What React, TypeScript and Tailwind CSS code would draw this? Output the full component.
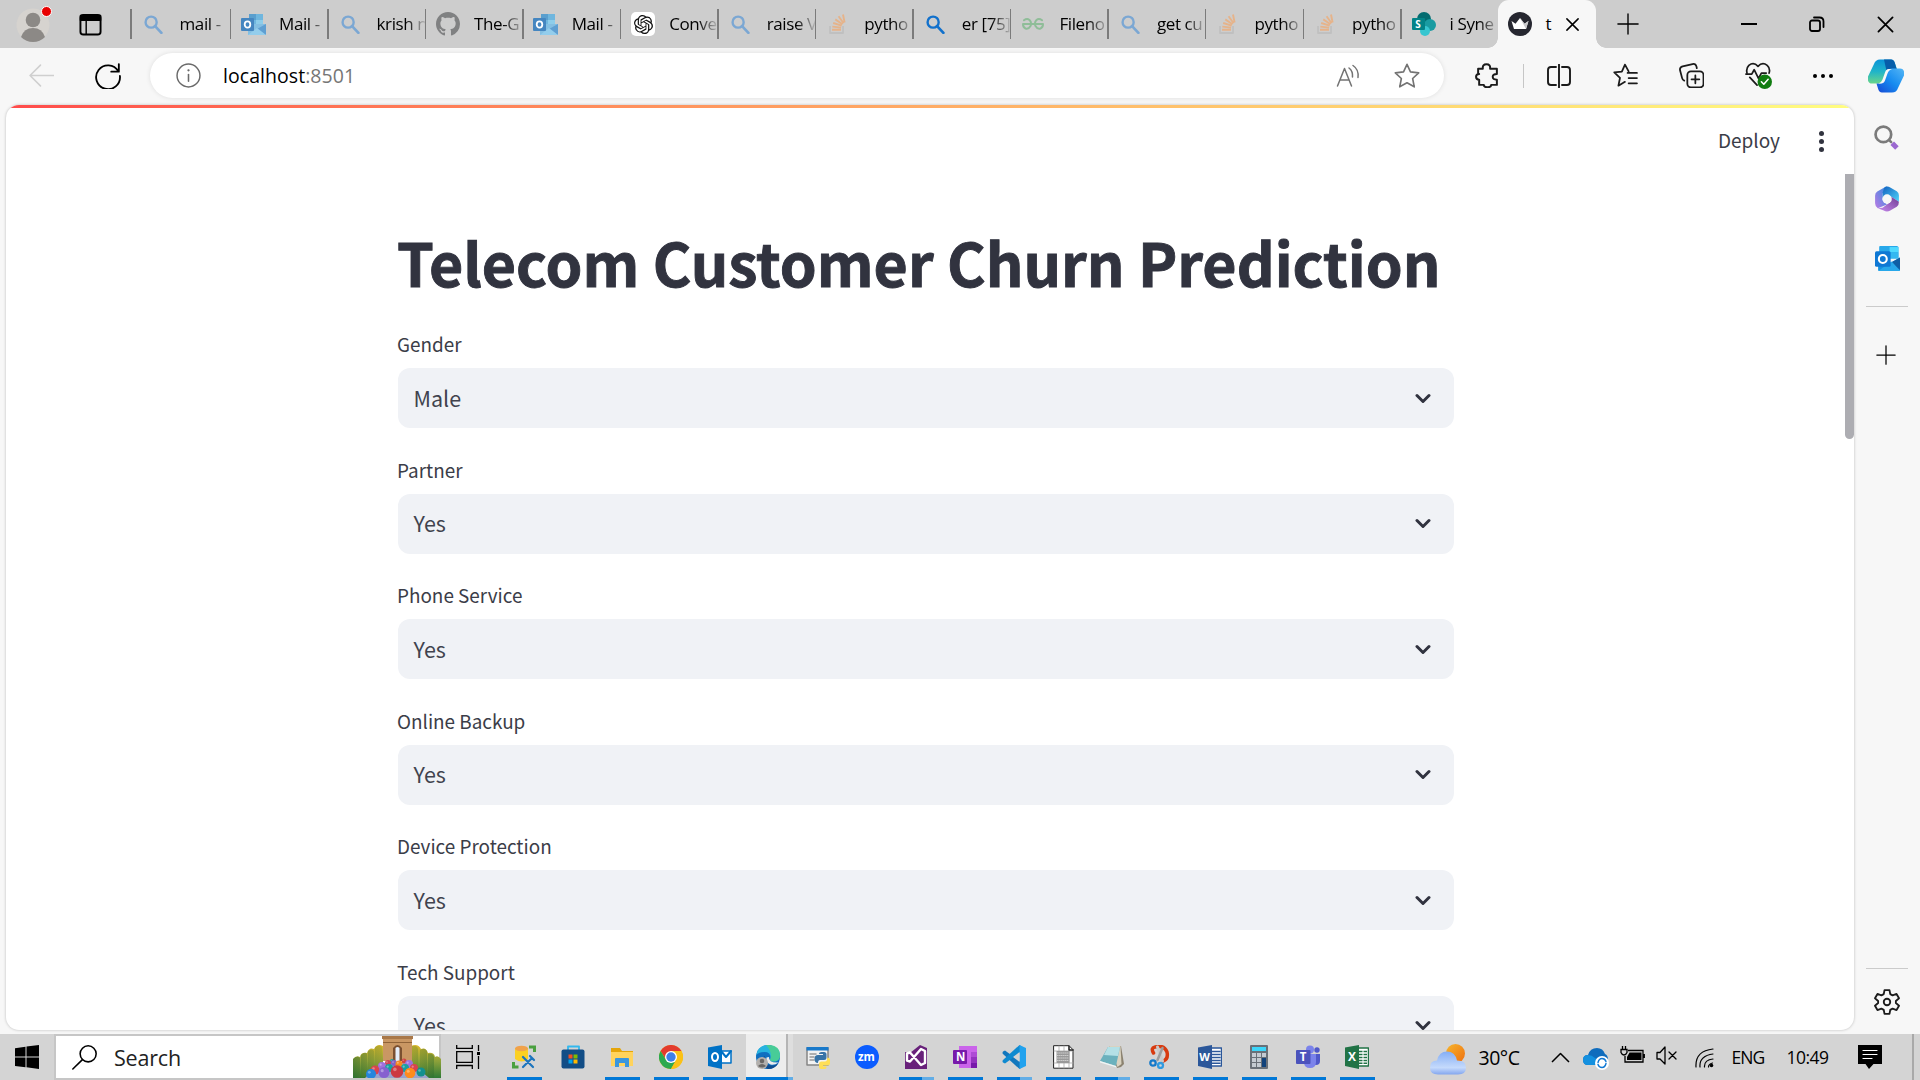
import React from "react";

type SvgProps = { className?: string; children: React.ReactNode; box?: string };
const Svg = ({ className = "size-6", children, box = "0 0 24 24" }: SvgProps) => (
  <svg viewBox={box} className={`${className} shrink-0`} fill="none" stroke="currentColor" strokeWidth={1.5} strokeLinecap="round" strokeLinejoin="round">
    {children}
  </svg>
);

/* ---------- tab favicons ---------- */
const SearchFav = ({ active = false }: { active?: boolean }) => (
  <Svg className={active ? "size-[19px] text-[#1271cc]" : "size-[19px] text-[#7ba7d3]"}>
    <circle cx="9" cy="9" r="7" strokeWidth="3" />
    <path d="M14 14l8 8.5" strokeWidth="3.4" />
  </Svg>
);
const OutlookFav = () => (
  <Svg className="h-[21px] w-[25px]" box="0 0 25 21">
    <g stroke="none">
      <path d="M8 0h14v12H8z" fill="#6fb6de" />
      <path d="M8 0h7v6H8z" fill="#5a9fce" />
      <path d="M15 6h7v6h-7z" fill="#8dcdea" />
      <path d="M7 10l18 0v11H7z" fill="#84bfe2" />
      <path d="M25 10v11l-9-6z" fill="#5f9fd2" />
      <path d="M7 21l9-7 9 7z" fill="#93cdec" />
      <rect y="4" width="13" height="13" rx="1" fill="#4586c0" />
    </g>
    <ellipse cx="6.500" cy="10.500" rx="2.800" ry="3.200" stroke="#fff" strokeWidth="1.800" />
  </Svg>
);
const GithubFav = () => (
  <Svg className="size-6" box="0 0 16 16">
    <path stroke="none" fill="#808182" d="M8 0C3.58 0 0 3.58 0 8c0 3.54 2.29 6.53 5.47 7.59.4.07.55-.17.55-.38 0-.19-.01-.82-.01-1.49-2.01.37-2.53-.49-2.69-.94-.09-.23-.48-.94-.82-1.13-.28-.15-.68-.52-.01-.53.63-.01 1.08.58 1.23.82.72 1.21 1.87.87 2.33.66.07-.52.28-.87.51-1.07-1.78-.2-3.64-.89-3.64-3.95 0-.87.31-1.59.82-2.15-.08-.2-.36-1.02.08-2.12 0 0 .67-.21 2.2.82.64-.18 1.32-.27 2-.27s1.36.09 2 .27c1.53-1.04 2.2-.82 2.2-.82.44 1.1.16 1.92.08 2.12.51.56.82 1.27.82 2.15 0 3.07-1.87 3.75-3.65 3.95.29.25.54.73.54 1.48 0 1.07-.01 1.93-.01 2.2 0 .21.15.46.55.38A8.01 8.01 0 0016 8c0-4.42-3.58-8-8-8z" />
  </Svg>
);
const OpenAiFav = () => (
  <span className="flex size-6 shrink-0 items-center justify-center rounded-[5px] bg-white">
    <Svg className="size-[19px]" box="0 0 24 24">
      <path stroke="none" fill="#111" d="M22.28 9.82a5.98 5.98 0 0 0-.52-4.91 6.05 6.05 0 0 0-6.51-2.9A6.07 6.07 0 0 0 4.98 4.18a5.98 5.98 0 0 0-4 2.9 6.05 6.05 0 0 0 .75 7.1 5.98 5.98 0 0 0 .51 4.91 6.05 6.05 0 0 0 6.52 2.9A5.98 5.98 0 0 0 13.26 24a6.06 6.06 0 0 0 5.77-4.21 5.99 5.99 0 0 0 4-2.9 6.06 6.06 0 0 0-.75-7.07zm-9.02 12.61a4.48 4.48 0 0 1-2.88-1.04l.14-.08 4.78-2.76a.79.79 0 0 0 .39-.68v-6.74l2.02 1.17a.07.07 0 0 1 .04.05v5.58a4.5 4.5 0 0 1-4.49 4.5zM3.6 18.3a4.47 4.47 0 0 1-.54-3.01l.14.08 4.78 2.76a.77.77 0 0 0 .78 0l5.84-3.37v2.33a.08.08 0 0 1-.03.06L9.74 19.95A4.5 4.5 0 0 1 3.6 18.3zM2.34 7.9a4.49 4.49 0 0 1 2.37-1.98V11.6a.77.77 0 0 0 .39.68l5.81 3.35-2.02 1.17a.08.08 0 0 1-.07 0l-4.83-2.79A4.5 4.5 0 0 1 2.34 7.87zm16.6 3.86L13.1 8.36l2.02-1.16a.08.08 0 0 1 .07 0l4.83 2.79a4.49 4.49 0 0 1-.68 8.1v-5.68a.79.79 0 0 0-.4-.66zm2-3.03l-.14-.08-4.77-2.78a.78.78 0 0 0-.79 0L9.41 9.23V6.9a.07.07 0 0 1 .03-.06l4.83-2.79a4.5 4.5 0 0 1 6.68 4.66zM8.3 12.86l-2.02-1.16a.08.08 0 0 1-.04-.06V6.07a4.5 4.5 0 0 1 7.38-3.45l-.14.08-4.78 2.76a.79.79 0 0 0-.39.68zm1.1-2.36L12 9l2.6 1.5v3L12 15l-2.6-1.5z" />
    </Svg>
  </span>
);
const StackFav = () => (
  <Svg className="size-5" box="0 0 20 20">
    <path d="M2 12v7h13v-7" stroke="#c0c0c0" strokeWidth="1.8" strokeLinecap="butt" />
    <g stroke="#e6b38a" strokeWidth="1.9" strokeLinecap="butt">
      <path d="M4 15.8h9M4.3 12.6l8.8 1M5.2 9l8.5 2.6M7.3 5.4l7.2 4.8M10.6 2.2l5 7M15 0.5l1.6 8" />
    </g>
  </Svg>
);
const GeeksFav = () => (
  <Svg className="h-3 w-[22px]" box="0 0 22 12">
    <g stroke="#8fbd98" strokeWidth="2">
      <path d="M1 6h20M2 2.300Q5 0 7.500 2 10 4.500 8.500 8 6.500 11.500 3.500 10.500 1 9.500 1 6M20 2.300Q17 0 14.500 2 12 4.500 13.500 8 15.500 11.500 18.500 10.500 21 9.500 21 6" />
    </g>
  </Svg>
);
const SharepointFav = () => (
  <Svg className="size-6">
    <g stroke="none">
      <circle cx="12" cy="7" r="7" fill="#036c70" />
      <circle cx="18" cy="13" r="6" fill="#1a9ba1" />
      <circle cx="13" cy="19" r="5" fill="#37c6d0" />
      <rect y="6" width="13" height="12" rx="1" fill="#038387" />
      <text x="3.3" y="15.6" fill="#fff" className="font-['Open_Sans',sans-serif] text-[10px] font-bold">S</text>
    </g>
  </Svg>
);
const CrownFav = () => (
  <Svg className="size-6">
    <g stroke="none">
      <circle cx="12" cy="12" r="12" fill="#262730" />
      <path d="M3.500 9l4 2.800L12 6l4.500 5.800 4-2.800-2.500 8H6z" fill="#fff" />
      <path d="M12 6l4.500 5.800 4-2.800-2.500 8z" fill="#c9c9cc" />
    </g>
  </Svg>
);

const tabs: { icon: React.ReactNode; title: string }[] = [
  { icon: <SearchFav />, title: "mail -" },
  { icon: <OutlookFav />, title: "Mail -" },
  { icon: <SearchFav />, title: "krish n" },
  { icon: <GithubFav />, title: "The-G" },
  { icon: <OutlookFav />, title: "Mail -" },
  { icon: <OpenAiFav />, title: "Conve" },
  { icon: <SearchFav />, title: "raise V" },
  { icon: <StackFav />, title: "pytho" },
  { icon: <SearchFav active />, title: "er [75]" },
  { icon: <GeeksFav />, title: "Fileno" },
  { icon: <SearchFav />, title: "get cu" },
  { icon: <StackFav />, title: "pytho" },
  { icon: <StackFav />, title: "pytho" },
  { icon: <SharepointFav />, title: "i Syne" },
];

function TabStrip() {
  return (
    <header className="flex h-12 shrink-0 items-stretch bg-[#cdcdcd] text-black">
      <div className="flex w-[130px] items-center pl-4">
        <div className="relative mt-0.5 h-[34px] w-[34px]">
          <Svg className="size-[34px]" box="0 0 34 34">
            <g stroke="none">
              <circle cx="17" cy="17" r="16.500" fill="#d6d3cf" />
              <circle cx="17" cy="12" r="7.300" fill="#8c8986" />
              <path d="M5 29q3-9 12-9t12 9q-5 5-12 5t-12-5z" fill="#8c8986" />
            </g>
          </Svg>
          <span className="absolute -top-[2px] left-[25px] size-[11px] rounded-full border border-white bg-[#e80000]" />
        </div>
        <Svg className="ml-[29px] size-[23px]">
          <rect x="1.500" y="2" width="21" height="20.500" rx="3" strokeWidth="2" />
          <path d="M1.500 2.500h21v5h-21z" fill="currentColor" />
          <path d="M7.500 7v15" />
        </Svg>
      </div>
      {tabs.map((t, i) => (
        <div key={i} className={i === 0 ? "flex w-[99.500px] shrink-0 items-center" : "flex w-[97.550px] shrink-0 items-center"}>
          <span className="h-[30px] w-[1.500px] shrink-0 bg-[#7b7b7b]" />
          <span className="flex w-[48px] shrink-0 items-center justify-center pr-1">{t.icon}</span>
          <span className="w-[48px] overflow-hidden whitespace-nowrap text-[17px] tracking-[-0.4px] [mask-image:linear-gradient(90deg,#000_60%,transparent_105%)]">{t.title}</span>
        </div>
      ))}
      <div className="relative flex w-[98px] shrink-0 items-center rounded-t-[11px] bg-[#f7f7f7]">
        <span className="absolute bottom-0 -left-2.5 size-2.5 bg-[radial-gradient(circle_at_0_0,#cdcdcd_9.500px,#f7f7f7_10px)]" />
        <span className="absolute bottom-0 -right-2.5 size-2.5 bg-[radial-gradient(circle_at_100%_0,#cdcdcd_9.500px,#f7f7f7_10px)]" />
        <span className="ml-2.5"><CrownFav /></span>
        <span className="ml-[14px] w-2.5 text-[17px]">t</span>
        <Svg className="ml-[9px] size-[15px]"><path d="M3 3l18 18M21 3L3 21" strokeWidth="2.400" /></Svg>
      </div>
      <div className="flex flex-1 items-center justify-between pl-[21px] pr-[26px]">
        <Svg className="size-[22px]"><path d="M1 12h22M12 1v22" /></Svg>
        <div className="flex items-center gap-[52px]">
          <span className="h-[2px] w-4 bg-black" />
          <Svg className="size-4" box="0 0 16 16">
            <rect x="1" y="4.500" width="10" height="10.500" rx="2" strokeWidth="1.800" />
            <path d="M5 1.500h5.500q4 0 4 4V11" strokeWidth="1.800" />
          </Svg>
          <Svg className="size-[17px]"><path d="M2 2l20 20M22 2L2 22" strokeWidth="2.500" /></Svg>
        </div>
      </div>
    </header>
  );
}

const star = "M12 1.200l3.200 7 7.600.9-5.600 5.200 1.500 7.700L12 18.300 5.300 22l1.500-7.700L1.200 9.100l7.600-.9z";

function Toolbar() {
  return (
    <div className="flex h-[57px] shrink-0 items-center bg-[#f7f7f7] pb-0.5 text-[#1b1b1b]">
      <Svg className="ml-[29px] size-[25px] text-[#cfcfcf]"><path d="M23.500 12H1M11 2L1 12l10 10" /></Svg>
      <Svg className="ml-[41px] size-[26px] text-black"><path d="M21.500 7.500A11 11 0 1 0 23 12M22 1v7h-7" strokeWidth="1.700" /></Svg>
      <div className="ml-[29px] flex h-[45px] w-[1294px] items-center rounded-full bg-white shadow-[0_0_5px_rgba(0,0,0,0.1)]">
        <Svg className="ml-[26px] size-[25px] text-[#6a6a6a]">
          <circle cx="12" cy="12" r="11" strokeWidth="1.400" />
          <path d="M12 11v6.500" /><circle cx="12" cy="7" r=".6" fill="currentColor" strokeWidth="1" />
        </Svg>
        <div className="ml-[22px] pt-px text-[19.500px] leading-6 tracking-[0.050px] text-black">
          localhost<span className="text-[#767676]">:8501</span>
        </div>
        <div className="ml-auto mr-[24px] flex items-center gap-[34px] text-[#737373]">
          <Svg className="size-6"><path d="M1.500 22L8.500 4.500 15.500 22M4 16h9M13 4q4 3 3.500 9M17 1.500q6 4 5 12" /></Svg>
          <Svg className="size-[26px]"><path d={star} /></Svg>
        </div>
      </div>
      <div className="flex flex-1 items-center">
        <Svg className="ml-[31px] size-[25px]"><path strokeWidth="1.900" d="M3 5.500h4.500q-.5-4.300 3.500-4.300t3.500 4.300H21v5q-4 0-4 2.800t4 2.700v5h-5.500q0 2.300-3.500 2.300T8.500 21H4v-5q-3 0-3-2.700t3-2.800H3z" /></Svg>
        <span className="ml-[23px] h-6 w-px bg-[#c6c6c6]" />
        <Svg className="ml-[23px] size-6"><path strokeWidth="1.900" d="M9 3H4Q1 3 1 6v12q0 3 3 3h5M15 3h5q3 0 3 3v12q0 3-3 3h-5M12 .500v23" /></Svg>
        <Svg className="ml-[42px] size-[25px]"><path strokeWidth="1.700" d="M15 8l-3.500-6.500-3 6.700-7.300.9 5.500 5.200-1.500 7.500 6.300-3.700M14 9.500h9M15 14.500h8M15 19.500h8" /></Svg>
        <Svg className="ml-[41px] size-[25px]"><g strokeWidth="1.700"><rect x="8" y="8" width="15.500" height="15.500" rx="3.500" /><path d="M15.700 12v7.500M12 15.700h7.500M5 17Q3.500 16.500 3 14.500L1 7Q.5 4 3.500 3.200L13 1q3-.5 3.800 2.500l.3 1.500" /></g></Svg>
        <Svg className="ml-[41px] size-[27px]" box="0 0 28 28">
          <path strokeWidth="1.800" d="M2 11Q1 6.500 4 3.500q5-4 9.500 1 4.500-5 9.500-1 3.500 3 2 8M5 16l7.500 8M1 12.500h6L9.500 8l4.500 9 3-5.500h5" />
          <circle cx="20.500" cy="20.500" r="7.500" fill="#107c10" stroke="none" />
          <path d="M17 20.500l2.500 2.500 4.500-5" stroke="#fff" strokeWidth="1.600" />
        </Svg>
        <div className="ml-[41px] flex gap-[4px]">
          <i className="size-1 rounded-full bg-black" /><i className="size-1 rounded-full bg-black" /><i className="size-1 rounded-full bg-black" />
        </div>
        <Svg className="ml-[35px] h-[34px] w-[36px]" box="0 0 36 34">
          <defs>
            <linearGradient id="cpA" x1="0" y1="0" x2="0" y2="1"><stop stopColor="#0a93d8" /><stop offset=".5" stopColor="#20b4c9" /><stop offset="1" stopColor="#69d58a" /></linearGradient>
            <linearGradient id="cpB" x1="1" y1="0" x2="0" y2="1"><stop stopColor="#55b6f5" /><stop offset=".5" stopColor="#168cf0" /><stop offset="1" stopColor="#1747d4" /></linearGradient>
          </defs>
          <g stroke="none">
            <path d="M6 5Q7.500 .500 12 .500h11q3 0 4 4l2 5.500h-5q-5 0-6.500 5l-2 6.500q-1 3-4.500 3H4q-5 0-4-7z" fill="url(#cpA)" />
            <path d="M16 .500h7q3 0 4 4l1.500 5.500h-5q-3 0-5 2z" fill="#075da9" />
            <path d="M30 29q-1.500 4.500-6 4.500H14q-3 0-4-4L8.500 24.500h3q4 0 5-4l3-8q1-3 4.500-3h8q5 0 4 7z" fill="url(#cpB)" />
            <path d="M20.500 10h3.500q-3.500 1-4.500 4.500l-2.500 7q-1 3-4 3h-2.500q3-1 4-4l2.500-7q1-3.500 3.500-3.500z" fill="#f7f7f7" />
          </g>
        </Svg>
      </div>
    </div>
  );
}

/* ---------- streamlit page ---------- */
const fields = [
  ["Gender", "Male"],
  ["Partner", "Yes"],
  ["Phone Service", "Yes"],
  ["Online Backup", "Yes"],
  ["Device Protection", "Yes"],
  ["Tech Support", "Yes"],
];

function Page() {
  return (
    <main className="relative ml-1.5 flex h-[925px] w-[1848px] shrink-0 flex-col overflow-hidden rounded-[13px] bg-white font-['Noto_Sans_CJK_SC',sans-serif] text-[#31333f] shadow-[0_0_3px_rgba(0,0,0,0.25)]">
      <div className="h-[3px] shrink-0 bg-linear-to-r from-[#ff4b4b] to-[#fffd80]" />
      <div className="flex h-[66px] shrink-0 items-center justify-end pr-[30px]">
        <span className="mb-0.5 text-[19px] text-[#3b3d48]">Deploy</span>
        <span className="ml-[39px] flex flex-col gap-[3px]">
          <i className="size-[5px] rounded-full bg-[#31333f]" /><i className="size-[5px] rounded-full bg-[#31333f]" /><i className="size-[5px] rounded-full bg-[#31333f]" />
        </span>
      </div>
      <span className="absolute right-0 top-[69px] h-[265px] w-[9px] rounded-b-full bg-[#adadb2]" />
      <section className="ml-[392px] w-[1056px]">
        <h1 className="-ml-px mt-[48px] h-[80px] whitespace-nowrap text-[59px] font-bold leading-[80px] [-webkit-text-stroke:0.900px_#31333f]">Telecom Customer Churn Prediction</h1>
        <div className="mt-[27px]">
          {fields.map(([label, value]) => (
            <div key={label} className="h-[125.600px]">
              <div className="-ml-px h-[39px] text-[18.900px] leading-[29px] text-[#3b3d48]">{label}</div>
              <div className="flex h-[60px] items-center justify-between rounded-xl bg-[#f0f2f6] pl-[15.500px] pr-[23px]">
                <span className="mb-px text-[21.500px] leading-8 text-[#41434e]">{value}</span>
                <Svg className="h-[11px] w-4" box="0 0 16 11"><path d="M2 2.500l6 6 6-6" strokeWidth="3" /></Svg>
              </div>
            </div>
          ))}
        </div>
      </section>
    </main>
  );
}

function Sidebar() {
  return (
    <aside className="flex flex-1 flex-col items-center pr-0.5">
      <Svg className="mt-5 size-[25px]">
        <circle cx="9" cy="9" r="7.500" stroke="#7b7b7b" strokeWidth="2.600" />
        <path d="M14.500 14.500l2 2" stroke="#7b7b7b" strokeWidth="2.500" /><path d="M17.500 17.500l4.500 4.500" stroke="#9b68d0" strokeWidth="4.800" strokeLinecap="butt" />
      </Svg>
      <Svg className="ml-0.5 mt-[36px] size-[26px]">
        <defs>
          <linearGradient id="mA" x1="1" y1="0" x2="0" y2="1"><stop stopColor="#2d8de0" /><stop offset="1" stopColor="#bb7be5" /></linearGradient>
          <linearGradient id="mB" x1="0" y1="0" x2="1" y2="1"><stop stopColor="#1261c0" /><stop offset="1" stopColor="#4fd5fa" /></linearGradient>
          <linearGradient id="mC" x1="0" y1="1" x2="1" y2="0"><stop stopColor="#c98bf0" /><stop offset="1" stopColor="#713d94" /></linearGradient>
        </defs>
        <g stroke="none">
          <path d="M12 0L3 5Q1 6 1 9v7q0 3 2.500 4.500L12 17l-4-4V7z" fill="url(#mA)" />
          <path d="M9.500 1.500Q12-.5 15 1.300l6 3.500q2 1.200 2 3.700v6L16 10l-4-2-4 3V6z" fill="url(#mB)" />
          <path d="M3.500 20.500L8 20l8-6v-4l7 4.500Q23 18 21 19.200l-6 3.500q-3 1.800-6 0z" fill="url(#mC)" />
          <circle cx="12" cy="12" r="4.300" fill="#f7f7f7" />
        </g>
      </Svg>
      <Svg className="ml-0.5 mt-[34px] size-[25px]">
        <g stroke="none">
          <path d="M5 0h16q1.500 0 1.500 1.500V12H4V1q0-1 1-1z" fill="#28a8ea" />
          <path d="M14 1h8.500v5H14z" fill="#50d9ff" /><path d="M14 6h8.500v6H14z" fill="#35b8f1" />
          <path d="M3 12l12 4 9-5v12q0 1-1 1H4q-1 0-1-1z" fill="#1490df" />
          <path d="M15 16l9-5v12z" fill="#0f5fa5" /><path d="M3 24l13-9 8 8.500-1 .5z" fill="#28a8ea" />
          <rect y="5" width="15" height="15" rx="1.500" fill="#0f78d4" />
        </g>
        <circle cx="7.500" cy="12.500" r="3.800" stroke="#fff" strokeWidth="2" />
      </Svg>
      <span className="ml-0.5 mt-[35px] h-px w-[42px] bg-[#cbcbcb]" />
      <Svg className="mt-[38px] size-5 text-black"><path d="M1 12h22M12 1v22" /></Svg>
      <span className="ml-0.5 mt-auto h-px w-[42px] bg-[#cbcbcb]" />
      <Svg className="ml-0.5 mb-[15px] mt-[20px] size-[26px] text-[#1b1b1b]">
        <path strokeWidth="1.700" d="M9.700 1h4.600l.7 3.700 2.200 1.200 3.600-1.300 2.300 4-2.900 2.400v2l2.900 2.400-2.300 4-3.600-1.300-2.200 1.200-.7 3.700H9.700L9 19.300l-2.200-1.200-3.600 1.300-2.300-4L3.800 13v-2L.9 8.600l2.300-4 3.600 1.300L9 4.700z" />
        <circle cx="12" cy="12" r="3" strokeWidth="1.700" />
      </Svg>
    </aside>
  );
}

/* ---------- taskbar icons ---------- */
const Lt = ({ x, y, s, children }: { x: number; y: number; s: string; children: string }) => (
  <text x={x} y={y} fill="#fff" stroke="none" className={`${s} font-['Open_Sans',sans-serif] font-bold`}>{children}</text>
);
const apps: { art: React.ReactNode; line: 0 | 1 | 2 }[] = [
  { line: 1, art: <><g stroke="none"><path d="M3 3h13v11q-6 5-13 0z" fill="#fbd022" /><ellipse cx="9.500" cy="3.500" rx="6.500" ry="2.800" fill="#f0a24b" /></g><path d="M17 2h5.500v5M1.500 17v5h5" stroke="#4aa03f" strokeWidth="3" strokeLinecap="butt" strokeLinejoin="miter" /><path d="M11 22l9-9M12 13l9 9M11 12l3 3M18 11l4 4" stroke="#1b74bd" strokeWidth="2.200" /></> },
  { line: 0, art: <><path d="M7 5V1.500h11V5" stroke="#32b8ee" strokeWidth="1.800" /><rect x=".5" y="4.500" width="23" height="19" rx="2" fill="#124d86" stroke="none" /><g stroke="none"><path fill="#f25022" d="M7.500 9.500h4v4h-4z" /><path fill="#7fba00" d="M12.500 9.500h4v4h-4z" /><path fill="#00a4ef" d="M7.500 14.500h4v4h-4z" /><path fill="#ffb900" d="M12.500 14.500h4v4h-4z" /></g></> },
  { line: 1, art: <g stroke="none"><path d="M1 3h9l2 3h11v15H1z" fill="#e5a50a" /><path d="M1 7h22v14H1z" fill="#ffd35c" /><path d="M5 22v-8q0-1 1-1h12q1 0 1 1v8h-4v-4H9v4z" fill="#3a96dd" /></g> },
  { line: 1, art: <g stroke="none"><circle cx="12" cy="12" r="12" fill="#fbc116" /><path d="M1.600 6A12 12 0 0 1 22.400 6L12 6.500l-5 8z" fill="#e33b2e" /><path d="M1.600 6A12 12 0 0 0 12 24l5-9-5 2.500-5-2.800z" fill="#2da94f" /><path d="M12 6h10.400A12 12 0 0 1 12 24l5.200-9z" fill="#fbc116" /><circle cx="12" cy="12" r="6" fill="#fff" /><circle cx="12" cy="12" r="4.700" fill="#3f7fe8" /></g> },
  { line: 1, art: <><path d="M13 6h10v12H13z" fill="#fff" stroke="#0072c6" /><path d="M13 6l5 6 5-6" stroke="#0072c6" strokeWidth="2" /><path d="M0 2.500L14 0v24L0 21z" fill="#0072c6" stroke="none" /><ellipse cx="7" cy="12" rx="3" ry="4" stroke="#fff" strokeWidth="2" /></> },
  { line: 2, art: <g stroke="none"><circle cx="12" cy="12" r="12" fill="#0f6fc0" /><path d="M.300 10Q2 0 12 0q12 1 12 10.500 0 6-7 6-4-.5-2.500-3Q15 7 8.500 7 3 7 .300 10z" fill="#27b4e0" /><path d="M10 0q14-1 14 10.500 0 6-7 6-4-.5-2.500-3 2-6-4.500-13.500z" fill="#4fd08a" opacity=".85" /><path d="M9 11q-1 6 4 9 5 2 9.500-2-3.500 6-10.500 6-7-2-6-8 0-4 3-5z" fill="#104c8f" /><path d="M13 12q-.5 6 9.500 5.500-4 3-8 2-5-2-4-7z" fill="#ededed" /><circle cx="6" cy="18" r="6" fill="#b3b0ad" /><circle cx="6" cy="16" r="2.300" fill="#6a6765" /><path d="M2 21q4-4 8 0-4 3-8 0z" fill="#6a6765" /></g> },
  { line: 0, art: <><path d="M1 3h21v17H1z" fill="#f2f2f2" stroke="#858585" /><path d="M.5 2h22v3.500H.5z" fill="#1979ca" stroke="none" /><path d="M4 9h6M4 12h4M4 15h4" stroke="#999" /><g stroke="none"><path d="M13 8.500q0-1.500 2.500-1.500H18q2.500 0 2.500 2.500v3q0 2.500-2.500 2.500h-4q-2 0-2 3-3.500 0-3.500-4t3.500-4h5v-1h-4z" fill="#3773a7" /><path d="M20.500 22.500q0 1.500-2.500 1.500h-2.500Q13 24 13 21.500V19q0-2.500 2.500-2.500H19q2.300 0 2.300-4 3 0 3 4t-3 4H17v1h3.500z" fill="#ffdf56" /></g></> },
  { line: 0, art: <><circle cx="12" cy="12" r="12" fill="#0b5cff" stroke="none" /><Lt x={3} y={15.500} s="text-[11.500px]">zm</Lt></> },
  { line: 2, art: <><path d="M1 7l5 1L16 0l7 3v21H1z" fill="#68217a" stroke="none" /><path d="M3 8.500v7l3 1L17 4l4 2v12l-4 2L6 7.500z" stroke="#fff" strokeWidth="2.400" /></> },
  { line: 1, art: <g stroke="none"><path d="M6 1h18v22H6z" fill="#ca64ea" /><path d="M18 7h6v5.500h-6z" fill="#ae4bd5" /><path d="M18 12h6v6h-6z" fill="#9332bf" /><path d="M18 18h6v5h-6z" fill="#7719aa" /><rect y="5" width="14" height="14" rx="1" fill="#7719aa" /><Lt x={3} y={16.300} s="text-[11.500px]">N</Lt></g> },
  { line: 2, art: <g stroke="none"><path d="M1 6.500l2-1L23 20l-5.500 4L1 9q-1-1 0-2.500z" fill="#1277bd" /><path d="M1 17.500l2 1L23 4l-5.500-4L1 15q-1 1 0 2.500z" fill="#0f8ad0" /><path d="M17.500 0L24 3v18l-6.500 3V0z" fill="#22a2ee" /><path d="M17.500 7v10L11 12z" fill="#d4d4d4" /></g> },
  { line: 1, art: <><path d="M3 .700h15l4 4v18.500H3z" fill="#fff" stroke="#222" strokeWidth="1" /><path d="M3 6h19M3 18h19M8 1v22M13 1v22M18 1v22" stroke="#aaa" strokeWidth=".8" /><path d="M5.500 6h13v12h-13z" fill="#999" stroke="none" /><path d="M6 8h12M6 10.500h12M6 13h12M6 15.500h12" stroke="#ccc" strokeDasharray="1 1" strokeWidth="1" /><path d="M18 1v4h4" stroke="#222" /></> },
  { line: 2, art: <g stroke="none"><path d="M9 1h12l3 18-3 3-4 1z" fill="#8b8270" /><path d="M9 1h11.500l1 18-4 3z" fill="#d9d2c0" /><path d="M8 2h12l-4 19L0 16z" fill="#6bb1bd" /><path d="M8 2h12l-2 9L4 10z" fill="#b4e0e6" /><path d="M0 16l16 5 .500 1.500L0 17.500z" fill="#eef5f5" /></g> },
  { line: 1, art: <><path d="M4.500 8Q1.500 3 6 2q9-2.500 12 5 1.500 7-3.500 9" stroke="#d83b10" strokeWidth="3.500" /><path d="M8.500 2l5 14" stroke="#c9c9c9" strokeWidth="3" /><path d="M13.500 3L8.500 15" stroke="#9d9d9d" strokeWidth="2.500" /><circle cx="4" cy="18" r="2.700" stroke="#1479c9" strokeWidth="2.300" /><circle cx="11.500" cy="20.500" r="2.500" stroke="#2f9ae0" strokeWidth="2.300" /></> },
  { line: 1, art: <><path d="M12 3h11.500v18H12z" fill="#fff" stroke="#2b579a" /><path d="M14 6.500h8M14 9.500h8M14 12.500h8M14 15.500h8M14 18.200h8" stroke="#2b579a" /><path d="M0 2.500L14 0v24L0 21z" fill="#2b579a" stroke="none" /><Lt x={1.200} y={16} s="text-[11px]">W</Lt></> },
  { line: 1, art: <g stroke="none"><rect x="3" y="0" width="18" height="24" rx="1" fill="#697078" /><path d="M5 2h14v4H5z" fill="#3dd6fa" /><g fill="#c4cbd2"><path d="M5 8h4v4H5zM10 8h4v4h-4zM15 8h4v4h-4zM5 13h4v4H5zM10 13h4v4h-4zM5 18h4v4H5zM10 18h4v4h-4z" /></g><path d="M15 13h4v9h-4z" fill="#11427b" /></g> },
  { line: 1, art: <g stroke="none"><circle cx="14" cy="4.500" r="4" fill="#7b83eb" /><circle cx="21" cy="5" r="2.700" fill="#5059c9" /><path d="M18 9h6v7q0 4-4 4h-4z" fill="#5059c9" /><path d="M9 9h11v8q0 6-6 6t-6-6z" fill="#7b83eb" /><rect y="5" width="14.500" height="14" rx="1" fill="#4b53bc" /><Lt x={3.800} y={16} s="text-[11.500px]">T</Lt></g> },
  { line: 1, art: <><path d="M12 3h11.500v18H12z" fill="#fff" stroke="#217346" /><path d="M14 6.500h8M14 9.500h8M14 12.500h8M14 15.500h8M14 18.200h8" stroke="#217346" strokeWidth="1.600" strokeDasharray="3.500 1" strokeLinecap="butt" /><path d="M0 2.500L14 0v24L0 21z" fill="#217346" stroke="none" /><Lt x={3} y={16.200} s="text-[12px]">X</Lt></> },
];

const balls: [number, number, number, string][] = [
  [39, 25, 2, "#159b9b"], [51, 25, 2.500, "#d04343"], [35, 27, 3, "#d04354"], [41, 27, 3, "#8561c5"], [56, 28, 4, "#a070dc"], [46, 28, 3.500, "#f58a1f"], [29, 30, 4, "#a070dc"], [61, 32, 4, "#d9434e"], [22, 34, 4.500, "#d9434e"], [36, 32, 4, "#15a0a0"], [52, 32, 4, "#17a0a0"], [18, 38, 5, "#2586dd"], [31, 36.500, 5.500, "#8661cf"], [44, 35.500, 6.300, "#cc3940"], [57, 37, 5.300, "#ff8c1c"], [68, 36, 4.500, "#12908f"],
];

function Taskbar() {
  return (
    <footer className="flex h-[46px] shrink-0 items-stretch bg-[#d4d4d4] text-black">
      <div className="flex w-[54px] items-center justify-center">
        <Svg className="size-6"><path stroke="none" fill="#000" d="M0 3.300L10.500 1.700V11.500H0zM11.500 1.500L24 0v11.500H11.500zM0 12.500h10.500v9.800L0 21zM11.500 12.500H24V24l-12.500-1.700z" /></Svg>
      </div>
      <div className="flex w-[387px] items-center border-2 border-[#c6c6c6] bg-white">
        <Svg className="ml-4 size-[25px]"><circle cx="15.500" cy="8.500" r="7.700" /><path d="M10 14L.8 23" /></Svg>
        <span className="ml-[17px] mt-0.5 text-[21.500px] tracking-[-0.200px] text-[#222]">Search</span>
        <Svg className="-mr-0.5 ml-auto h-[42px] w-[88px]" box="0 0 88 42">
          <defs>
            <linearGradient id="tree" x1="0" y1="0" x2="0" y2="1"><stop stopColor="#ddb92c" /><stop offset=".5" stopColor="#8aa03a" /><stop offset="1" stopColor="#2e7a35" /></linearGradient>
            <linearGradient id="tree2" x1="0" y1="0" x2="1" y2="0"><stop stopColor="#2e6a2d" stopOpacity=".5" /><stop offset=".5" stopColor="#c8b030" stopOpacity=".4" /><stop offset="1" stopColor="#2e6a2d" stopOpacity=".4" /></linearGradient>
          </defs>
          <g stroke="none">
            <path d="M0 42V23q3-4 7-2 1-5 7-4 2-6 7-4 3-6 9-3v20L20 42z" fill="url(#tree)" />
            <path d="M88 42V23q-3-4-6-2-1-5-7-4-2-6-7-4-3-6-10-3v20l10 12z" fill="url(#tree)" />
            <path d="M0 42V23q4-4 7-1v20zM8 42V19q4-4 6-1v22zM15 38V15q4-3 6 0v18zM22 32V11q5-3 7 0v18zM59 30V10q5-1 6 3v20zM67 34V14q5-3 7 1v24zM75 40V18q5-1 6 3v21z" fill="url(#tree2)" />
            <path d="M30 25V4l-1-4h31l-1 4v21H49V13q-4.500-7-9 0v12z" fill="#c99763" />
            <path d="M29 0h31v3H29z" fill="#a97848" /><path d="M30 6h29v1H30z" fill="#8f6338" />
            <path d="M40 25V12q4.500-6 9 0v13z" fill="#7a5030" /><path d="M42.500 25V12q2-2 4 0v13z" fill="#e6eef8" />
            <path d="M12 42q30-32 64 0z" fill="#9aa3cc" />
            {balls.map(([x, y, r, c], i) => <g key={i}><circle cx={x} cy={y} r={r} fill={c} /><circle cx={x - r / 3} cy={y - r / 3} r={r / 3.500} fill="#fff" opacity=".35" /></g>)}
          </g>
        </Svg>
      </div>
      <div className="flex w-[58.500px] items-center pl-[15px]">
        <Svg className="size-6"><g strokeLinecap="butt" strokeLinejoin="miter" strokeWidth="1.300"><path d="M.7 0v3.300h15.600V0M.7 24v-3.500h15.600V24M.7 6.700h15.600v10.600H.7zM22.500 0v6M22.500 11v13" /></g><path d="M21 7h3v3h-3z" fill="#000" stroke="none" /></Svg>
      </div>
      {apps.map((a, i) => (
        <div key={i} className={i === 5 ? "relative flex w-[49px] shrink-0 items-center justify-center pr-[3px]" : "relative flex w-[49px] shrink-0 items-center justify-center"}>
          {i === 5 && <span className="absolute inset-y-0 left-[1px] w-10 bg-[#ededed]" />}
          {i === 5 && <span className="absolute inset-y-0 left-[41px] w-[7px] border-l-2 border-[#b5b5b5] bg-[#dedede]" />}
          <Svg className="relative size-6">{a.art}</Svg>
          {a.line > 0 && (
            <span className={i === 5 ? "absolute bottom-0 left-[1px] flex h-[3px] w-[47px] bg-[#0078d7]" : "absolute bottom-0 left-[7px] flex h-[3px] w-[35px] bg-[#0078d7]"}>
              {a.line === 2 && <i className={i === 5 ? "ml-auto w-[5px] bg-[#62ade6]" : "ml-auto w-3 bg-[#62ade6]"} />}
            </span>
          )}
        </div>
      ))}
      <div className="flex flex-1 items-center pl-[48px]">
        <Svg className="mt-1 h-[31px] w-9" box="0 0 36 31">
          <defs>
            <linearGradient id="cl" x1="0" y1="0" x2="0" y2="1"><stop stopColor="#84aef5" /><stop offset=".7" stopColor="#c5dafc" /><stop offset="1" stopColor="#83a6ee" /></linearGradient>
            <linearGradient id="sun" x1="0" y1="0" x2="1" y2="1"><stop stopColor="#f7b52c" /><stop offset="1" stopColor="#ee6f10" /></linearGradient>
          </defs>
          <g stroke="none"><circle cx="25.500" cy="9.500" r="9.500" fill="url(#sun)" /><path d="M8 30.500q-8 0-8-7t7-7Q9 7.500 17 7.500t10 9q9 0 9 7t-8 7z" fill="url(#cl)" /></g>
        </Svg>
        <span className="ml-[13px] mt-0.5 w-[72px] text-[19.500px] tracking-[-0.500px]">30°C</span>
        <Svg className="h-[11px] w-[19px]" box="0 0 19 11"><path d="M1 10l8.500-8.500L18 10" strokeLinecap="butt" /></Svg>
        <Svg className="ml-[13px] mt-1 h-[22px] w-[26px]" box="0 0 26 22">
          <g stroke="none"><path d="M5 17q-5 0-5-5t5-5q2-7 9-7 6 0 8 6 3 1 3 6l-5 5z" fill="#0f6cbd" /><path d="M5 17q-5 0-5-5t5-5q4 0 7 3l5 3-3 4z" fill="#1490df" /><circle cx="19" cy="15" r="7" fill="#fff" /></g>
          <path d="M15 14.500q1-4 4-4t4 3M23 15.500q-1 4-4 4t-4-3" stroke="#0f78d4" strokeWidth="1.400" />
        </Svg>
        <Svg className="mb-1 ml-[11px] h-[18px] w-[25px]" box="0 0 25 18"><g strokeWidth="1.300" strokeLinecap="butt" strokeLinejoin="miter"><path d="M8 4.500h15V16H5V10M24.300 8v4M1 3.500h6v3q-1 2.500-3 2.500T1 6.500zM2.500 0v3M5.500 0v3" /></g><path d="M9.500 6.500h12v7.500H7v-3z" fill="#000" stroke="none" /></Svg>
        <Svg className="mb-1 ml-[11px] h-[19px] w-[22px]" box="0 0 22 19"><g strokeWidth="1.300"><path d="M1 6.500h3L9 1v17l-5-5H1zM13 6l7 7M20 6l-7 7" /></g></Svg>
        <Svg className="ml-[17px] mt-0.5 h-5 w-[19px]" box="0 0 19 20"><g strokeWidth="1.200"><path d="M1 19Q0 3 18 1M5 19Q4 8 18 6M9.500 19Q9 12 18 11M13.500 19q0-3 4-4" /></g><circle cx="16.500" cy="17.500" r="1.800" fill="#000" stroke="none" /></Svg>
        <span className="ml-[18px] mt-px w-[55px] text-[17.500px] tracking-[-0.900px]">ENG</span>
        <span className="mt-px w-[71px] text-[17.500px] tracking-[-0.500px]">10:49</span>
        <Svg className="size-6"><path stroke="none" fill="#000" d="M0 0h24v19h-8.500L11 24l-3.500-5H0z" /><path d="M5 5.500h14M5 9.500h14M5 13.500h9" stroke="#fff" strokeWidth="1.200" /></Svg>
        <span className="ml-auto mr-1.5 h-full w-0.5 bg-[#a9a9a9]" />
      </div>
    </footer>
  );
}

export default function App() {
  return (
    <div className="flex h-[1080px] w-[1920px] flex-col overflow-hidden bg-[#f7f7f7] font-['Open_Sans',sans-serif]">
      <TabStrip />
      <Toolbar />
      <div className="flex h-[925px] shrink-0"><Page /><Sidebar /></div>
      <div className="h-1 shrink-0" />
      <Taskbar />
    </div>
  );
}
